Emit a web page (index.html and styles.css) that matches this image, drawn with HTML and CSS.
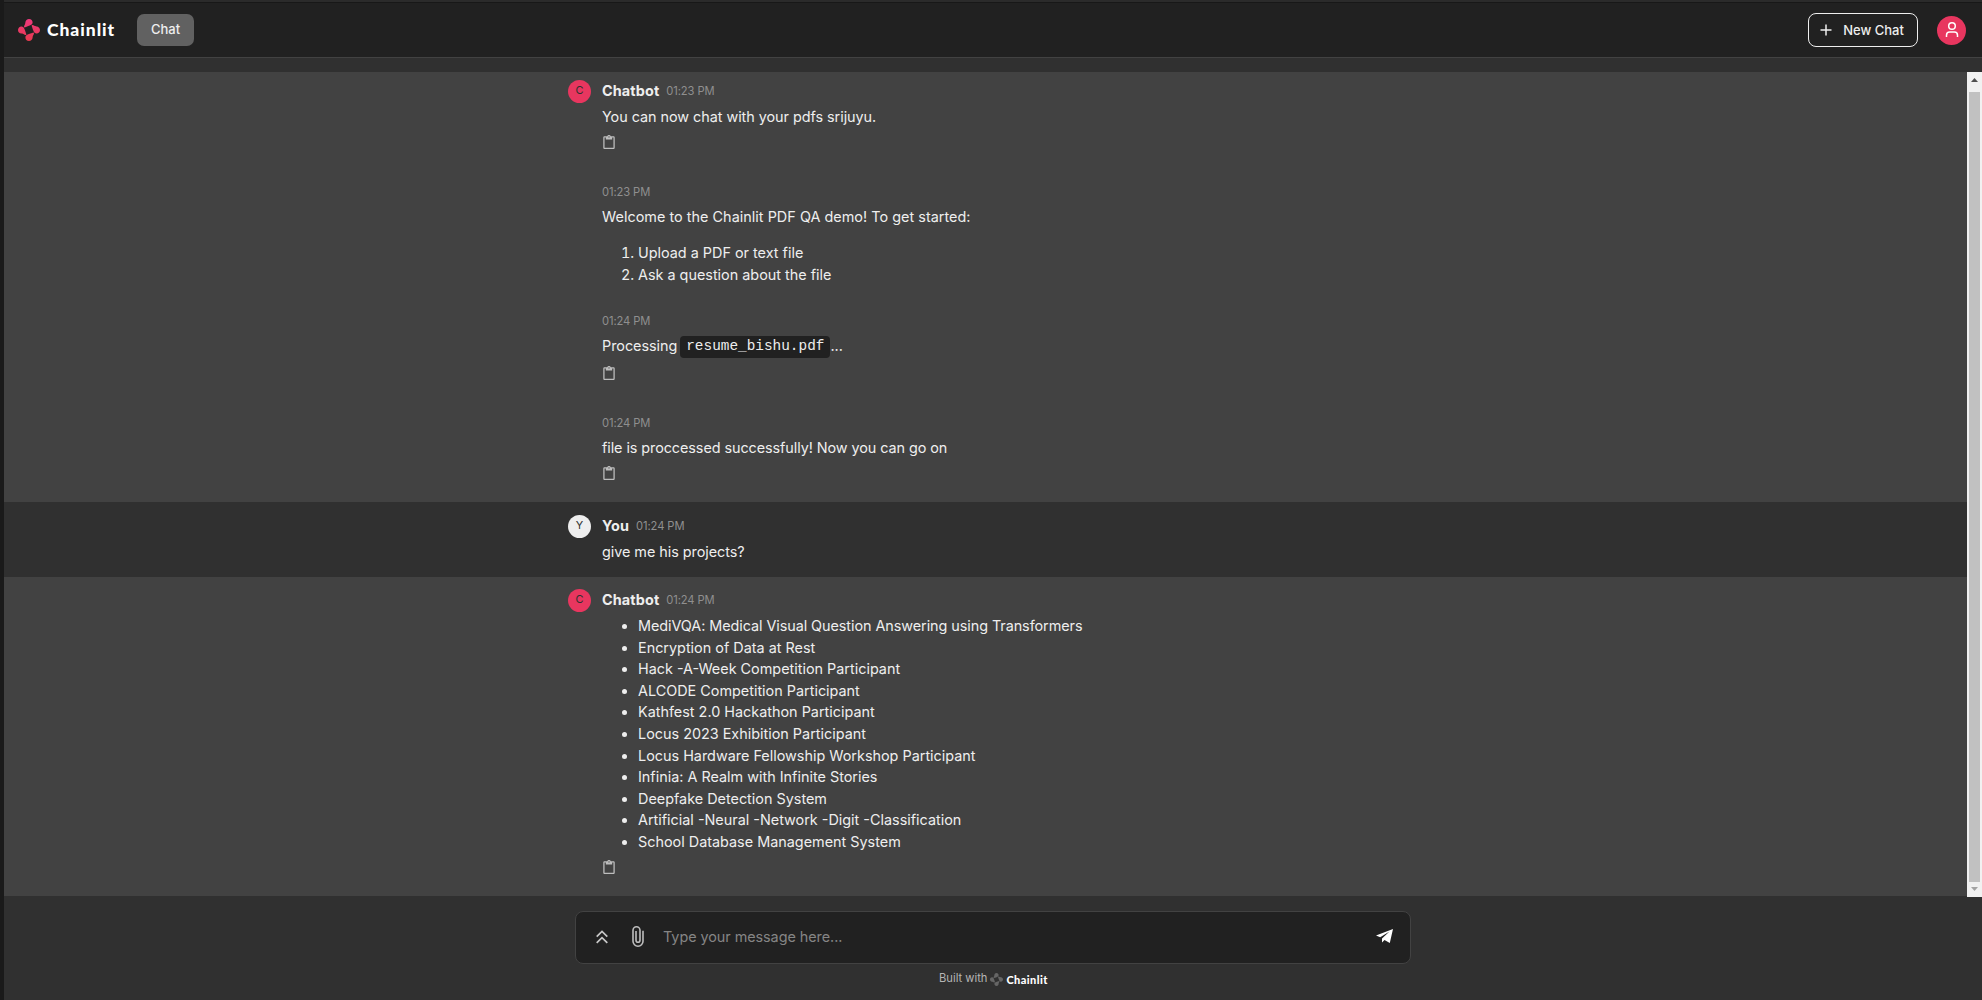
FILE: index.html
```html
<!DOCTYPE html>
<html lang="en">
<head>
<meta charset="utf-8">
<title>Chainlit</title>
<link rel="stylesheet" href="styles.css">
</head>
<body>
<svg class="defs" aria-hidden="true">
  <linearGradient id="pink" gradientUnits="userSpaceOnUse" x1="0" y1="0" x2="0" y2="22"><stop offset="0" stop-color="#f0397e"/><stop offset="1" stop-color="#e63a4e"/></linearGradient>
  <symbol id="mark" viewBox="0 0 22 22">
    <path d="M11 0C13.200 0 14.700 1.700 14.600 3.600 14.500 5.800 12.500 6.600 6.600 8.400 6 8.200 5.900 7.600 6.100 7 7.200 5.300 7.300 4.300 7.400 3.300 7.600 1.500 9 0 11 0zM22 11C22 13.200 20.300 14.700 18.400 14.600 16.200 14.500 15.400 12.500 13.600 6.600 13.800 6 14.400 5.900 15 6.100 16.700 7.200 17.700 7.300 18.700 7.400 20.500 7.600 22 9 22 11zM11 22C8.800 22 7.300 20.300 7.400 18.400 7.500 16.200 9.500 15.400 15.400 13.600 16 13.800 16.100 14.400 15.900 15 14.800 16.700 14.700 17.700 14.600 18.700 14.400 20.500 13 22 11 22zM0 11C0 8.800 1.700 7.300 3.600 7.400 5.800 7.500 6.600 9.500 8.400 15.400 8.200 16 7.600 16.100 7 15.900 5.300 14.800 4.300 14.700 3.300 14.600 1.500 14.400 0 13 0 11z"/>
  </symbol>
  <symbol id="clip" viewBox="3 0 18 22"><path d="M19 2h-4.200C14.400.8 13.300 0 12 0S9.600.8 9.200 2H5c-1.100 0-2 .9-2 2v16c0 1.100.9 2 2 2h14c1.100 0 2-.9 2-2V4c0-1.100-.9-2-2-2zm-7 0c.6 0 1 .4 1 1s-.4 1-1 1-1-.4-1-1 .4-1 1-1zm7 18H5V4h2v3h10V4h2v16z"/></symbol>
</svg>
<div class="app">
  <header class="header">
    <svg class="logo-mark"><use href="#mark"/></svg>
    <span class="logo-text">Chainlit</span>
    <span class="tab">Chat</span>
    <button class="new-chat"><svg width="12" height="12" viewBox="0 0 12 12"><path d="M6 .5v11M.5 6h11" stroke="#eee" stroke-width="1.500"/></svg>New Chat</button>
    <span class="user"><svg width="20" height="20" viewBox="0 0 20 20" fill="none" stroke="#fff" stroke-width="1.500"><circle cx="10" cy="6" r="3.300"/><path d="M4.500 17v-1.800c0-2 1.200-3.200 3.200-3.200h4.600c2 0 3.200 1.200 3.200 3.200V17"/></svg></span>
  </header>
  <div class="scroll">
    <main class="thread">
      <section class="band first">
        <article class="msg m1"><span class="avatar">C</span><div class="head"><b>Chatbot</b><time>01:23 PM</time></div><p>You can now chat with your pdfs srijuyu.</p><svg class="clip"><use href="#clip"/></svg></article>
        <article class="msg m2"><time>01:23 PM</time><p class="welcome">Welcome to the Chainlit PDF QA demo! To get started:</p><ol><li>Upload a PDF or text file</li><li>Ask a question about the file</li></ol></article>
        <article class="msg m3"><time>01:24 PM</time><p>Processing <code>resume_bishu.pdf</code>...</p><svg class="clip"><use href="#clip"/></svg></article>
        <article class="msg m4"><time>01:24 PM</time><p>file is proccessed successfully! Now you can go on</p><svg class="clip"><use href="#clip"/></svg></article>
      </section>
      <section class="band you">
        <article class="msg"><span class="avatar">Y</span><div class="head"><b>You</b><time>01:24 PM</time></div><p>give me his projects?</p></article>
      </section>
      <section class="band last">
        <article class="msg"><span class="avatar">C</span><div class="head"><b>Chatbot</b><time>01:24 PM</time></div>
          <ul>
            <li class="tight">MediVQA: Medical Visual Question Answering using Transformers</li>
            <li>Encryption of Data at Rest</li>
            <li>Hack -A-Week Competition Participant</li>
            <li>ALCODE Competition Participant</li>
            <li>Kathfest 2.0 Hackathon Participant</li>
            <li>Locus 2023 Exhibition Participant</li>
            <li>Locus Hardware Fellowship Workshop Participant</li>
            <li>Infinia: A Realm with Infinite Stories</li>
            <li>Deepfake Detection System</li>
            <li>Artificial -Neural -Network -Digit -Classification</li>
            <li>School Database Management System</li>
          </ul>
          <svg class="clip"><use href="#clip"/></svg></article>
      </section>
    </main>
    <div class="scrollbar">
      <svg width="15" height="20" viewBox="0 0 15 20"><path d="M7.500 6l3.500 4H4z" fill="#505050"/></svg>
      <span class="thumb"></span>
      <svg width="15" height="15" viewBox="0 0 15 15"><path d="M4 5h7L7.500 9z" fill="#a3a3a3"/></svg>
    </div>
  </div>
  <footer class="footer">
    <div class="composer">
      <svg class="up" width="12" height="14" viewBox="0 0 12 14" fill="none" stroke="#c8c8c8" stroke-width="1.700"><path d="M.7 6.700L6 1.400l5.300 5.300M.7 12.900L6 7.600l5.300 5.300"/></svg>
      <svg class="attach" width="12" height="21" viewBox="0 0 12 21" fill="none" stroke="#bdbdbd" stroke-width="1.600"><path d="M11 4.800v10.400a5 5 0 0 1-10 0V4.300a3.500 3.500 0 0 1 7 0v10a2 2 0 0 1-4 0V5"/></svg>
      <span class="placeholder">Type your message here...</span>
      <svg class="send" width="17" height="15" viewBox="0 0 17 15" fill="#fff"><path d="M17 0L0 6.500 4.200 8.200 13.500 2.600 6 9.400V13.500L8.500 11.100 13.800 14z"/></svg>
    </div>
    <div class="built">Built with <svg class="small-mark"><use href="#mark"/></svg><span class="small-logo">Chainlit</span></div>
  </footer>
</div>
</body>
</html>
```
FILE: styles.css
```css
* { box-sizing: border-box; }
body { margin: 0; background: #1a1a1a; color: #eee; font: 14.4px/21.6px Inter, sans-serif; }
.defs { position: absolute; width: 0; height: 0; }
.app { height: 1000px; padding-left: 4px; display: flex; flex-direction: column; background: linear-gradient(90deg, #1a1a1a 4px, #303030 4px); }
.header { height: 58px; flex: none; display: flex; align-items: center; padding: 1px 16px 0 14px; background: #212121; border-top: 2px solid #2b2b2b; border-bottom: 1px solid #424242; box-shadow: inset 0 1px #181818; }
.logo-mark { width: 22px; height: 22px; fill: url(#pink); }
.logo-text { width: 97px; padding-left: 7px; font: 900 17.5px/24px Lato, sans-serif; letter-spacing: .95px; color: #fff; }
.tab { width: 57px; height: 32px; border-radius: 7px; background: #616161; font-size: 13px; font-weight: 500; line-height: 31px; text-align: center; }
.new-chat { width: 110px; height: 34px; margin: 0 19px 0 auto; padding: 0 2px 0 0; border: 1px solid #eee; border-radius: 8px; background: transparent; color: #eee; font: 500 13px/20px Inter, sans-serif; display: flex; align-items: center; justify-content: center; gap: 11px; }
.user { width: 29px; height: 29px; border-radius: 50%; background: #e8365f; display: grid; place-items: center; }
.scroll { height: 825px; margin-top: 14px; flex: none; display: flex; }
.thread { flex: 1; height: 824px; }
.band { background: #424242; padding-left: 598px; }
.first { height: 430px; padding-top: 7px; }
.you { height: 75px; padding-top: 12px; background: #303030; }
.last { height: 319px; padding-top: 11px; }
.msg { position: relative; }
.m1 { height: 102px; }
.m2 { height: 129px; }
.m3 { height: 102px; }
.avatar { position: absolute; left: -34px; top: 1px; width: 23px; height: 23px; border-radius: 50%; background: #e8365f; color: #303030; font-size: 11px; line-height: 21px; text-align: center; }
.you .avatar { background: #eee; }
.head { display: flex; align-items: center; gap: 7px; height: 24px; margin-bottom: 3px; }
.head b { font-weight: 700; letter-spacing: .12px; }
time { display: block; height: 22px; margin-bottom: 3px; font-size: 11.2px; line-height: 22px; letter-spacing: -.1px; color: #8f8f8f; }
.head time { margin: 0; }
p { margin: 0; height: 22px; letter-spacing: -.04px; }
.m4 p { letter-spacing: -.07px; }
.welcome { letter-spacing: .03px; }
.tight { letter-spacing: -.06px; }
code { display: inline-block; height: 22px; margin: 1px 0 0 -1px; padding: 0 6px; border-radius: 4px; background: #212121; font: 14.4px/21px "Liberation Mono", monospace; letter-spacing: 0; vertical-align: top; }
ol, ul { margin: 0; padding-left: 36px; }
ol { padding-top: 14px; }
.clip { display: block; width: 12px; height: 14px; margin: 7px 0 0 1px; fill: #bdbdbd; }
.m3 .clip { margin-top: 9px; }
.scrollbar { width: 15px; background: #f1f1f1; display: flex; flex-direction: column; }
.thumb { flex: 1; margin: 0 2px; background: #c1c1c1; }
.footer { width: 836px; margin: 14px 0 0 571px; }
.composer { height: 53px; padding: 0 17px 2px 20px; display: flex; align-items: center; background: #212121; border: 1px solid #424242; border-radius: 8px; }
.attach { margin: 0 19px 0 24px; }
.placeholder { flex: 1; color: #858585; letter-spacing: -.05px; }
.built { margin-top: 4px; padding-left: 364px; display: flex; align-items: center; font-size: 11.2px; color: #b5b5b5; }
.small-mark { width: 13px; height: 13px; margin: 2px 3px 0; fill: #666; }
.small-logo { font: 900 11px/14px Lato, sans-serif; letter-spacing: .4px; color: #fff; padding-top: 2px; }
```
